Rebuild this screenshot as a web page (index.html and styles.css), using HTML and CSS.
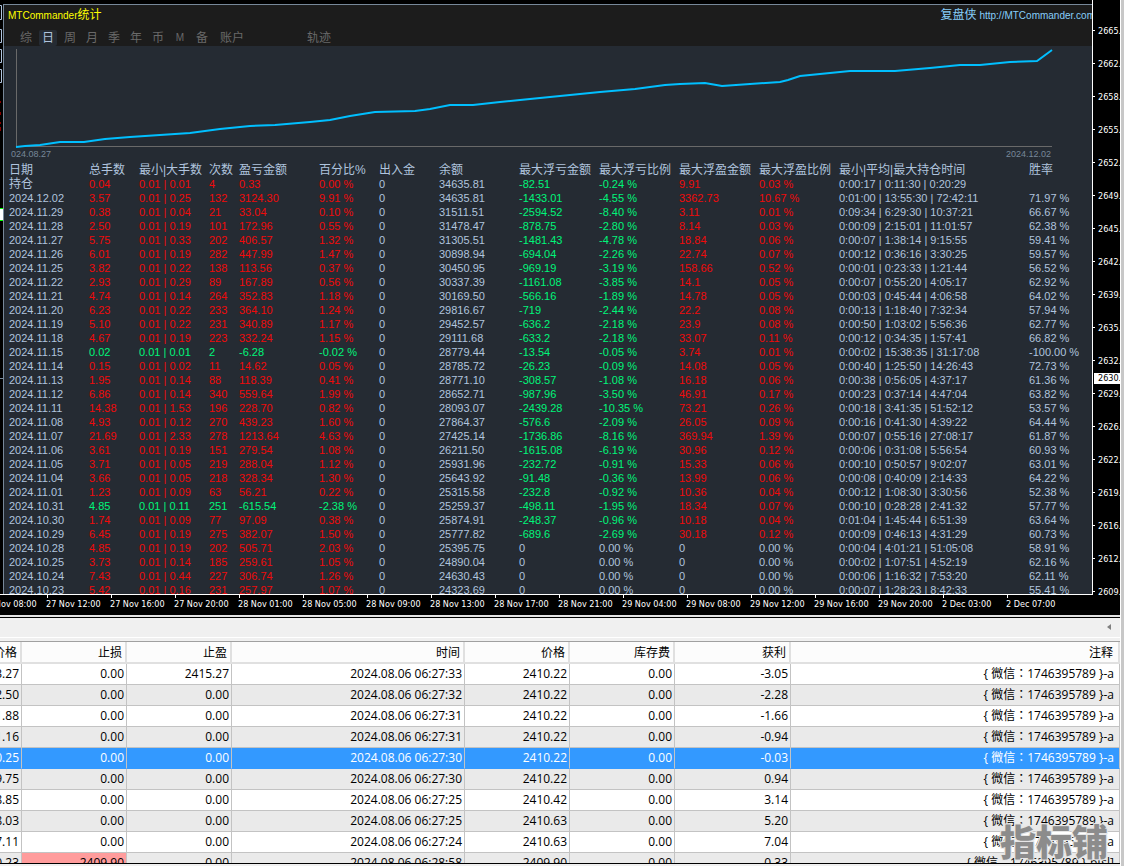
FILE: index.html
```html
<!DOCTYPE html>
<html lang="zh-CN">
<head>
    <meta charset="UTF-8">
    <title>MTCommander统计</title>
    <link rel="stylesheet" href="styles.css">
</head>
<body>
    <div class="window">
        <section class="chart">
            <div class="plot">
                <svg class="gutter" width="3" height="500" viewBox="0 0 3 500">
                    <g fill="none" stroke="#b0c4de">
                        <path d="M0 5.5h1.5v14h-1.5M0 29.5h1.5v13h-1.5M0 49.5h1.5v13h-1.5M0 69.5h1.5v13h-1.5" />
                        <path d="M0 378.5h3" stroke="#778899" />
                    </g>
                    <path d="M0 101h1v2h-1zM0 112h1v3h-1zM0 122h1v2h-1zM0 127h1v4h-1z" fill="#8b0000" />
                    <path d="M0 208h3v13h-3z" fill="#fff" />
                    <path d="M0 208h3v1h-3zM0 220h3v1h-3z" fill="#00ff00" />
                </svg>
                <div class="panel">
                    <header class="panel-head">
                        <div class="title-row">
                            <h1>MTCommander<span class="cjk">统计</span></h1>
                            <a class="site-link" href="http://MTCommander.com"><span class="cjk">复盘侠</span> http://MTCommander.com</a>
                        </div>
                        <nav class="tabs">
                            <button>综</button>
                            <button class="active">日</button>
                            <button>周</button>
                            <button>月</button>
                            <button>季</button>
                            <button>年</button>
                            <button>币</button>
                            <button class="latin">M</button>
                            <button>备</button>
                            <button class="wide">账户</button>
                            <button class="wide track">轨迹</button>
                        </nav>
                    </header>
                    <div class="curve">
                        <svg class="curve-svg" viewBox="16 46 1037 101" preserveAspectRatio="none">
                            <path class="axis" d="M16.5 49V146.5H1052" />
                            <polyline class="balance" points="16,147 25,146 40,145 60,142 84,142 105,139 130,137 160,135 190,133 220,129 250,126 275,125 310,122 330,120 350,116 375,112 415,111 430,109 450,105 473,105 500,102 520,100 550,97 570,95 600,92 635,89 665,85 680,84 705,83 722,86 750,84 780,82 788,80 800,76 850,71 895,71 930,68 960,65 980,65 1010,62 1037,61 1052,50" />
                        </svg>
                        <div class="curve-dates">
                            <span>024.08.27</span>
                            <span>2024.12.02</span>
                        </div>
                    </div>
                    <table class="stats">
                        <colgroup>
                            <col class="w80"><col class="w50"><col class="w70"><col class="w30"><col class="w80">
                            <col class="w60"><col class="w60"><col class="w80"><col class="w80"><col class="w80">
                            <col class="w80"><col class="w80"><col class="w190"><col>
                        </colgroup>
                        <thead>
                            <tr>
                                <th>日期</th>
                                <th>总手数</th>
                                <th>最小|大手数</th>
                                <th>次数</th>
                                <th>盈亏金额</th>
                                <th>百分比%</th>
                                <th>出入金</th>
                                <th>余额</th>
                                <th>最大浮亏金额</th>
                                <th>最大浮亏比例</th>
                                <th>最大浮盈金额</th>
                                <th>最大浮盈比例</th>
                                <th>最小|平均|最大持仓时间</th>
                                <th>胜率</th>
                            </tr>
                        </thead>
                        <tbody id="stats-body"></tbody>
                    </table>
                </div>
            </div>
            <div class="price-axis">
                <ul id="price-list"></ul>
                <span class="price-tag">2630.</span>
            </div>
            <ul class="time-axis" id="time-list"></ul>
        </section>

        <section class="terminal">
            <div class="tab-strip">
                <button class="scroll-left" aria-label="向左滚动">
                    <svg width="4" height="6" viewBox="0 0 4 6"><path d="M4 0v6L0 3z" fill="#808080" /></svg>
                </button>
            </div>
            <div class="orders-wrap">
                <table class="orders">
                    <colgroup>
                        <col class="w105"><col class="w105"><col class="w105"><col class="w233"><col class="w105">
                        <col class="w105"><col class="w116"><col>
                    </colgroup>
                    <thead>
                        <tr>
                            <th>价格</th>
                            <th>止损</th>
                            <th>止盈</th>
                            <th>时间</th>
                            <th>价格</th>
                            <th>库存费</th>
                            <th>获利</th>
                            <th>注释</th>
                        </tr>
                    </thead>
                    <tbody id="orders-body"></tbody>
                </table>
                <div class="watermark">指标铺</div>
            </div>
        </section>
    </div>
    <script src="app.js"></script>
</body>
</html>
```

FILE: styles.css
```css
* {
    box-sizing: border-box;
}

body {
    margin: 0;
    height: 100vh;
    overflow: hidden;
    background: #c8c8c8;
    font-family: "Liberation Sans", "Noto Sans CJK SC", sans-serif;
}

ul {
    list-style: none;
    margin: 0;
    padding: 0;
}

button {
    border: none;
    background: none;
    padding: 0;
    font-family: inherit;
}

table {
    border-collapse: separate;
    border-spacing: 0;
    table-layout: fixed;
}

th, td {
    padding: 0;
    font-weight: normal;
    white-space: nowrap;
}

.window {
    display: flex;
    flex-direction: column;
    height: 100%;
    margin-right: 3px;
    border-right: 1px solid #fff;
    background: #f0f0f0;
}

/* chart */
.chart {
    flex: 1;
    min-height: 0;
    display: grid;
    grid-template-columns: minmax(0, 1fr) 27px;
    grid-template-rows: minmax(0, 1fr) 20px;
    background: #000;
    color: #fff;
    overflow: hidden;
}

.plot {
    display: flex;
    padding-top: 4px;
    border-right: 1px solid #fff;
    border-bottom: 1px solid #fff;
    overflow: hidden;
}

.gutter {
    flex: none;
    margin-top: -4px;
}

.panel {
    flex: 1;
    min-width: 0;
    overflow: hidden;
    background: #252b33;
    border-top: 1px solid #778899;
    border-left: 1px solid #778899;
    color: #b0c4de;
}

.panel-head {
    background: #1c1c1c;
}

.title-row {
    display: flex;
    justify-content: space-between;
    height: 21px;
    line-height: 21px;
    padding-left: 4px;
    font-size: 10px;
    white-space: nowrap;
    overflow: hidden;
}

.title-row h1 {
    margin: 0;
    font-size: 10px;
    font-weight: normal;
    color: #ffff00;
}

.cjk {
    font-size: 12px;
}

.site-link {
    flex: none;
    margin-right: -3px;
    color: #87cefa;
    text-decoration: none;
}

.tabs {
    display: flex;
    gap: 4px;
    margin-top: 4px;
    padding-left: 13px;
}

.tabs button {
    width: 18px;
    height: 16px;
    line-height: 16px;
    border-radius: 2px;
    font-size: 12px;
    color: #696969;
}

.tabs button.wide {
    width: 34px;
}

.tabs button.latin {
    font-size: 10px;
}

.tabs button.track {
    margin-left: 49px;
}

.tabs button.active {
    background: #252b33;
    color: #b0c4de;
}

.curve {
    padding: 0 39px 0 12px;
}

.curve-svg {
    display: block;
    width: 100%;
    height: 101px;
    overflow: visible;
}

.axis {
    fill: none;
    stroke: #696969;
}

.balance {
    fill: none;
    stroke: #00bfff;
    stroke-width: 2;
}

.curve-dates {
    display: flex;
    justify-content: space-between;
    height: 16px;
    margin-left: -5px;
    padding-right: 2px;
    line-height: 14px;
    font-size: 9px;
    color: #778899;
}

.stats {
    width: 100%;
    padding-left: 5px;
    text-align: left;
    font-size: 11px;
}

.stats th, .stats td {
    height: 14px;
    line-height: 14px;
}

.stats th, .stats .hold {
    font-size: 12px;
}

.up {
    color: #f00a0a;
}

.down {
    color: #00f57a;
}

.w30 { width: 30px; }
.w50 { width: 50px; }
.w60 { width: 60px; }
.w70 { width: 70px; }
.w80 { width: 80px; }
.w105 { width: 105px; }
.w116 { width: 116px; }
.w190 { width: 190px; }
.w233 { width: 233px; }

.price-axis {
    grid-column: 2;
    grid-row: 1 / 3;
    position: relative;
    overflow: hidden;
    padding-top: 14px;
}

.price-axis, .time-axis {
    font-family: "DejaVu Sans Condensed", "DejaVu Sans", sans-serif;
    font-size: 9px;
}

.price-axis li {
    display: flex;
    align-items: center;
    gap: 3px;
    height: 33px;
}

.price-axis li::before {
    content: "";
    flex: none;
    width: 2px;
    height: 1px;
    background: #fff;
}

.price-tag {
    position: absolute;
    top: 373px;
    left: 1px;
    right: 0;
    height: 11px;
    padding-left: 4px;
    line-height: 11px;
    background: #fff;
    color: #000;
}

.time-axis {
    display: flex;
    margin-left: -18px;
    overflow: hidden;
}

.time-axis li {
    flex: none;
    width: 64px;
    line-height: 12px;
    white-space: nowrap;
}

.time-axis li::before {
    content: "";
    display: block;
    width: 1px;
    height: 3px;
    margin-left: 1px;
    background: #fff;
}

/* terminal */
.terminal {
    flex: none;
    display: flex;
    flex-direction: column;
    height: 251px;
    padding-bottom: 2px;
    border-top: 2px solid #e3e3e3;
}

.tab-strip {
    display: flex;
    justify-content: flex-end;
    align-items: center;
    height: 21px;
    padding-right: 9px;
    padding-bottom: 2px;
    border-top: 1px solid #000;
    border-bottom: 1px solid #fff;
}

.scroll-left {
    display: flex;
}

.orders-wrap {
    position: relative;
    flex: 1;
    min-height: 0;
    margin-top: 3px;
    border-top: 1px solid #a0a0a0;
    border-bottom: 1px solid #000;
    overflow: hidden;
}

/* first column is scrolled partly out of view */
.orders {
    width: calc(100% + 83px);
    margin-left: -83px;
    text-align: right;
    font-family: "Open Sans", "Noto Sans CJK TC", sans-serif;
    font-size: 12px;
    color: #000;
}

.orders th {
    height: 22px;
    line-height: 20px;
    padding-right: 3px;
    background: #fcfcfc;
    border-right: 2px solid #e0e0e0;
    border-bottom: 2px solid #e0e0e0;
    font-family: "Noto Sans CJK SC", sans-serif;
}

.orders td {
    height: 21px;
    line-height: 20px;
    padding-right: 2px;
    background: #fff;
    border-right: 1px solid #c3c3c3;
    border-bottom: 1px solid #c3c3c3;
}

.orders th:last-child, .orders td:last-child {
    padding-right: 5px;
}

/* traditional face centres the fullwidth colon */
.orders td:last-child {
    font-family: "Open Sans", "Noto Sans CJK TC", sans-serif;
}

.orders tr:nth-child(even) td {
    background: #eaeaea;
}

.orders tr.selected td {
    background: #3399ff;
    border-bottom-color: #3399ff;
    color: #fff;
}

.orders tr td.hit {
    background: #ff9c9c;
}

.watermark {
    position: absolute;
    right: 12px;
    bottom: 3px;
    line-height: 40px;
    font-family: "Noto Sans CJK SC", sans-serif;
    font-size: 36px;
    font-weight: 900;
    color: #8c8c8c;
    text-shadow: 1px 1px 0 #e6e6e6, -1px -1px 0 #e6e6e6, 1px -1px 0 #e6e6e6, -1px 1px 0 #e6e6e6;
}
```

FILE: app.js
```js
const days = [
    ['持仓', '0.04', '0.01 | 0.01', '4', '0.33', '0.00 %', '0', '34635.81', '-82.51', '-0.24 %', '9.91', '0.03 %', '0:00:17 | 0:11:30 | 0:20:29', ''],
    ['2024.12.02', '3.57', '0.01 | 0.25', '132', '3124.30', '9.91 %', '0', '34635.81', '-1433.01', '-4.55 %', '3362.73', '10.67 %', '0:01:00 | 13:55:30 | 72:42:11', '71.97 %'],
    ['2024.11.29', '0.38', '0.01 | 0.04', '21', '33.04', '0.10 %', '0', '31511.51', '-2594.52', '-8.40 %', '3.11', '0.01 %', '0:09:34 | 6:29:30 | 10:37:21', '66.67 %'],
    ['2024.11.28', '2.50', '0.01 | 0.19', '101', '172.96', '0.55 %', '0', '31478.47', '-878.75', '-2.80 %', '8.14', '0.03 %', '0:00:09 | 2:15:01 | 11:01:57', '62.38 %'],
    ['2024.11.27', '5.75', '0.01 | 0.33', '202', '406.57', '1.32 %', '0', '31305.51', '-1481.43', '-4.78 %', '18.84', '0.06 %', '0:00:07 | 1:38:14 | 9:15:55', '59.41 %'],
    ['2024.11.26', '6.01', '0.01 | 0.19', '282', '447.99', '1.47 %', '0', '30898.94', '-694.04', '-2.26 %', '22.74', '0.07 %', '0:00:12 | 0:36:16 | 3:30:25', '59.57 %'],
    ['2024.11.25', '3.82', '0.01 | 0.22', '138', '113.56', '0.37 %', '0', '30450.95', '-969.19', '-3.19 %', '158.66', '0.52 %', '0:00:01 | 0:23:33 | 1:21:44', '56.52 %'],
    ['2024.11.22', '2.93', '0.01 | 0.29', '89', '167.89', '0.56 %', '0', '30337.39', '-1161.08', '-3.85 %', '14.1', '0.05 %', '0:00:07 | 0:55:20 | 4:05:17', '62.92 %'],
    ['2024.11.21', '4.74', '0.01 | 0.14', '264', '352.83', '1.18 %', '0', '30169.50', '-566.16', '-1.89 %', '14.78', '0.05 %', '0:00:03 | 0:45:44 | 4:06:58', '64.02 %'],
    ['2024.11.20', '6.23', '0.01 | 0.22', '233', '364.10', '1.24 %', '0', '29816.67', '-719', '-2.44 %', '22.2', '0.08 %', '0:00:13 | 1:18:40 | 7:32:34', '57.94 %'],
    ['2024.11.19', '5.10', '0.01 | 0.22', '231', '340.89', '1.17 %', '0', '29452.57', '-636.2', '-2.18 %', '23.9', '0.08 %', '0:00:50 | 1:03:02 | 5:56:36', '62.77 %'],
    ['2024.11.18', '4.67', '0.01 | 0.19', '223', '332.24', '1.15 %', '0', '29111.68', '-633.2', '-2.18 %', '33.07', '0.11 %', '0:00:12 | 0:34:35 | 1:57:41', '66.82 %'],
    ['2024.11.15', '0.02', '0.01 | 0.01', '2', '-6.28', '-0.02 %', '0', '28779.44', '-13.54', '-0.05 %', '3.74', '0.01 %', '0:00:02 | 15:38:35 | 31:17:08', '-100.00 %'],
    ['2024.11.14', '0.15', '0.01 | 0.02', '11', '14.62', '0.05 %', '0', '28785.72', '-26.23', '-0.09 %', '14.08', '0.05 %', '0:00:40 | 1:25:50 | 14:26:43', '72.73 %'],
    ['2024.11.13', '1.95', '0.01 | 0.14', '88', '118.39', '0.41 %', '0', '28771.10', '-308.57', '-1.08 %', '16.18', '0.06 %', '0:00:38 | 0:56:05 | 4:37:17', '61.36 %'],
    ['2024.11.12', '6.86', '0.01 | 0.14', '340', '559.64', '1.99 %', '0', '28652.71', '-987.96', '-3.50 %', '46.91', '0.17 %', '0:00:23 | 0:37:14 | 4:47:04', '63.82 %'],
    ['2024.11.11', '14.38', '0.01 | 1.53', '196', '228.70', '0.82 %', '0', '28093.07', '-2439.28', '-10.35 %', '73.21', '0.26 %', '0:00:18 | 3:41:35 | 51:52:12', '53.57 %'],
    ['2024.11.08', '4.93', '0.01 | 0.12', '270', '439.23', '1.60 %', '0', '27864.37', '-576.6', '-2.09 %', '26.05', '0.09 %', '0:00:16 | 0:41:30 | 4:39:22', '64.44 %'],
    ['2024.11.07', '21.69', '0.01 | 2.33', '278', '1213.64', '4.63 %', '0', '27425.14', '-1736.86', '-8.16 %', '369.94', '1.39 %', '0:00:07 | 0:55:16 | 27:08:17', '61.87 %'],
    ['2024.11.06', '3.61', '0.01 | 0.19', '151', '279.54', '1.08 %', '0', '26211.50', '-1615.08', '-6.19 %', '30.96', '0.12 %', '0:00:06 | 0:31:08 | 5:56:54', '60.93 %'],
    ['2024.11.05', '3.71', '0.01 | 0.05', '219', '288.04', '1.12 %', '0', '25931.96', '-232.72', '-0.91 %', '15.33', '0.06 %', '0:00:10 | 0:50:57 | 9:02:07', '63.01 %'],
    ['2024.11.04', '3.66', '0.01 | 0.05', '218', '328.34', '1.30 %', '0', '25643.92', '-91.48', '-0.36 %', '13.99', '0.06 %', '0:00:08 | 0:40:09 | 2:14:33', '64.22 %'],
    ['2024.11.01', '1.23', '0.01 | 0.09', '63', '56.21', '0.22 %', '0', '25315.58', '-232.8', '-0.92 %', '10.36', '0.04 %', '0:00:12 | 1:08:30 | 3:30:56', '52.38 %'],
    ['2024.10.31', '4.85', '0.01 | 0.11', '251', '-615.54', '-2.38 %', '0', '25259.37', '-498.11', '-1.95 %', '18.34', '0.07 %', '0:00:10 | 0:28:28 | 2:41:32', '57.77 %'],
    ['2024.10.30', '1.74', '0.01 | 0.09', '77', '97.09', '0.38 %', '0', '25874.91', '-248.37', '-0.96 %', '10.18', '0.04 %', '0:01:04 | 1:45:44 | 6:51:39', '63.64 %'],
    ['2024.10.29', '6.45', '0.01 | 0.19', '275', '382.07', '1.50 %', '0', '25777.82', '-689.6', '-2.69 %', '30.18', '0.12 %', '0:00:09 | 0:46:13 | 4:31:29', '60.73 %'],
    ['2024.10.28', '4.85', '0.01 | 0.19', '202', '505.71', '2.03 %', '0', '25395.75', '0', '0.00 %', '0', '0.00 %', '0:00:04 | 4:01:21 | 51:05:08', '58.91 %'],
    ['2024.10.25', '3.73', '0.01 | 0.14', '185', '259.61', '1.05 %', '0', '24890.04', '0', '0.00 %', '0', '0.00 %', '0:00:02 | 1:07:51 | 4:52:19', '62.16 %'],
    ['2024.10.24', '7.43', '0.01 | 0.44', '227', '306.74', '1.26 %', '0', '24630.43', '0', '0.00 %', '0', '0.00 %', '0:00:06 | 1:16:32 | 7:53:20', '62.11 %'],
    ['2024.10.23', '5.42', '0.01 | 0.16', '231', '257.97', '1.07 %', '0', '24323.69', '0', '0.00 %', '0', '0.00 %', '0:00:07 | 1:28:23 | 8:42:33', '55.41 %']
];

const prices = [2665, 2662, 2658, 2655, 2652, 2649, 2645, 2642, 2639, 2635, 2632, 2629, 2626, 2622, 2619, 2616, 2612, 2609];

const times = [
    '27 Nov 08:00', '27 Nov 12:00', '27 Nov 16:00', '27 Nov 20:00', '28 Nov 01:00', '28 Nov 05:00',
    '28 Nov 09:00', '28 Nov 13:00', '28 Nov 17:00', '28 Nov 21:00', '29 Nov 04:00', '29 Nov 08:00',
    '29 Nov 12:00', '29 Nov 16:00', '29 Nov 20:00', '2 Dec 03:00', '2 Dec 07:00'
];

const note = '{ 微信：1746395789 }-a';
const orders = [
    ['2413.27', '0.00', '2415.27', '2024.08.06 06:27:33', '2410.22', '0.00', '-3.05', note],
    ['2412.50', '0.00', '0.00', '2024.08.06 06:27:32', '2410.22', '0.00', '-2.28', note],
    ['2411.88', '0.00', '0.00', '2024.08.06 06:27:31', '2410.22', '0.00', '-1.66', note],
    ['2411.16', '0.00', '0.00', '2024.08.06 06:27:31', '2410.22', '0.00', '-0.94', note],
    ['2410.25', '0.00', '0.00', '2024.08.06 06:27:30', '2410.22', '0.00', '-0.03', note],
    ['2409.75', '0.00', '0.00', '2024.08.06 06:27:30', '2410.22', '0.00', '0.94', note],
    ['2408.85', '0.00', '0.00', '2024.08.06 06:27:25', '2410.42', '0.00', '3.14', note],
    ['2408.03', '0.00', '0.00', '2024.08.06 06:27:25', '2410.63', '0.00', '5.20', note],
    ['2407.11', '0.00', '0.00', '2024.08.06 06:27:24', '2410.63', '0.00', '7.04', note],
    ['2410.23', '2409.90', '0.00', '2024.08.06 06:28:58', '2409.90', '0.00', '0.33', '{ 微信：1746395789 }-b[sl]']
];
const selectedOrder = 4;

function statClass(row, i) {
    if (i === 0 && row[0] === '持仓') return 'hold';
    // lots, count and profit follow the sign of the day's profit
    if (i >= 1 && i <= 5) return row[4].startsWith('-') ? 'down' : 'up';
    if ((i === 8 || i === 9) && row[8] !== '0') return 'down';
    if ((i === 10 || i === 11) && row[10] !== '0') return 'up';
    return '';
}

document.getElementById('stats-body').innerHTML = days.map(row =>
    '<tr>' + row.map((v, i) => `<td class="${statClass(row, i)}">${v}</td>`).join('') + '</tr>'
).join('');

document.getElementById('price-list').innerHTML = prices.map(p => `<li>${p}.</li>`).join('');
document.getElementById('time-list').innerHTML = times.map(t => `<li>${t}</li>`).join('');

document.getElementById('orders-body').innerHTML = orders.map((row, n) =>
    `<tr class="${n === selectedOrder ? 'selected' : ''}">` +
    row.map((v, i) => `<td class="${i === 1 && v !== '0.00' ? 'hit' : ''}"${i === 7 ? ' lang="zh-TW"' : ''}>${v}</td>`).join('') +
    '</tr>'
).join('');
```
